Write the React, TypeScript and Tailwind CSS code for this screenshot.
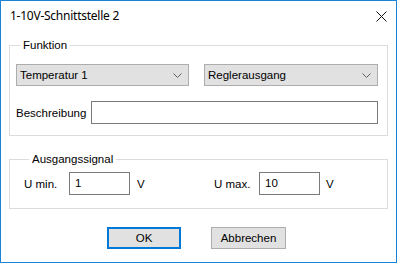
import React from 'react';

const Chevron = () => (
  <svg width="9" height="5" viewBox="0 0 9 5" className="shrink-0">
    <path d="M0.5 0.5 L4.5 4.5 L8.5 0.5" fill="none" stroke="#606060" strokeWidth="1" />
  </svg>
);

const Combo = ({ value }: { value: string }) => (
  <div className="flex items-center justify-between h-[22px] w-full border border-[#adadad] bg-[#e1e1e1] pl-[3px] pr-[6px]">
    <span>{value}</span>
    <Chevron />
  </div>
);

const App = () => {
  return (
    <div className="w-[397px] h-[263px] border border-[#1883d7] bg-white flex flex-col font-['Liberation_Sans',Arial,sans-serif] text-[11.5px] text-black leading-[16px]">
      {/* title bar */}
      <div className="h-[30px] flex items-center justify-between pl-[9px] pr-[9px] shrink-0">
        <span className="font-['Noto_Sans',sans-serif] text-[12px] tracking-[-0.25px]">1-10V-Schnittstelle 2</span>
        <svg width="11" height="11" viewBox="0 0 11 11">
          <path d="M0.5 0.5 L10.5 10.5 M10.5 0.5 L0.5 10.5" stroke="#111" strokeWidth="1" />
        </svg>
      </div>

      <div className="px-[8px] pt-[6px] flex flex-col">
        {/* Funktion */}
        <fieldset className="border border-[#dcdcdc] pl-[6px] pr-[5px] pt-[11px] pb-[11px] m-0">
          <legend className="ml-[4px] px-[3px]">Funktion</legend>
          <div className="flex gap-[15px]">
            <div className="w-[173px]">
              <Combo value="Temperatur 1" />
            </div>
            <div className="w-[174px]">
              <Combo value="Reglerausgang" />
            </div>
          </div>
          <div className="flex items-center mt-[15px]">
            <span className="w-[75px]">Beschreibung</span>
            <div className="w-[287px] h-[23px] border border-[#7a7a7a] bg-white" />
          </div>
        </fieldset>

        {/* Ausgangssignal */}
        <fieldset className="border border-[#dcdcdc] pl-[14px] pt-[5px] pb-[13px] mt-[15px] m-0">
          <legend className="ml-[5px] px-[3px]">Ausgangssignal</legend>
          <div className="flex items-center">
            <span className="w-[45px]">U min.</span>
            <div className="w-[61px] h-[23px] border border-[#7a7a7a] bg-white pl-[5px] pt-[2px]">1</div>
            <span className="ml-[7px] w-[77px]">V</span>
            <span className="w-[45px]">U max.</span>
            <div className="w-[61px] h-[23px] border border-[#7a7a7a] bg-white pl-[5px] pt-[2px]">10</div>
            <span className="ml-[6px]">V</span>
          </div>
        </fieldset>

        {/* buttons */}
        <div className="flex pl-[98px] mt-[18px] gap-[30px]">
          <button className="w-[74px] h-[22px] border-2 border-[#0078d7] bg-[#e1e1e1] flex items-center justify-center">
            OK
          </button>
          <button className="w-[75px] h-[22px] border border-[#adadad] bg-[#e1e1e1] flex items-center justify-center">
            Abbrechen
          </button>
        </div>
      </div>
    </div>
  );
};

export default App;
